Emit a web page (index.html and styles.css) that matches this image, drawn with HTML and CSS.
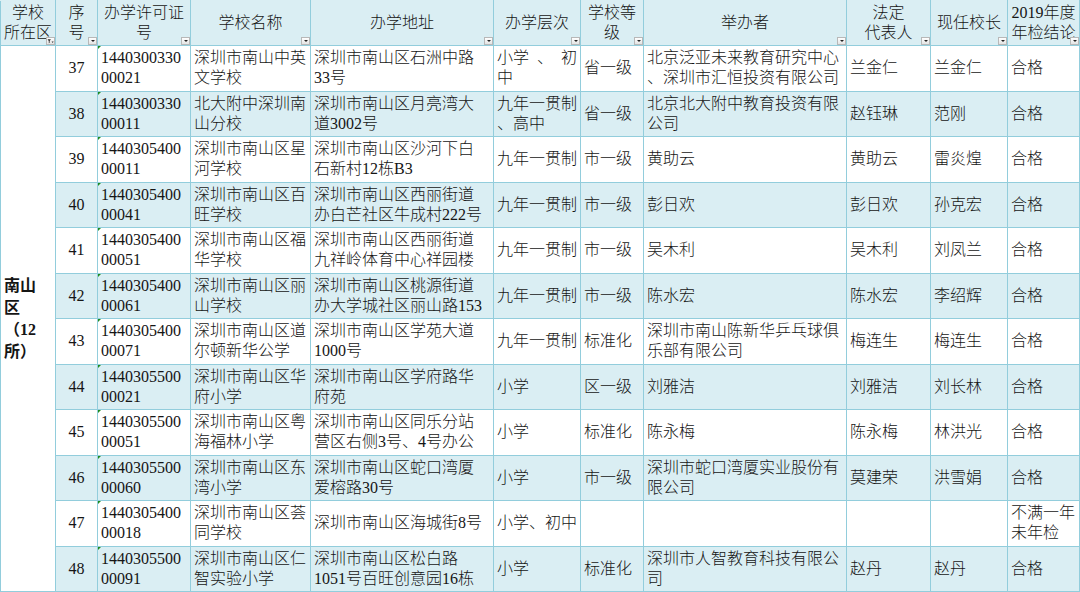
FILE: index.html
```html
<!DOCTYPE html>
<html lang="zh-CN">
<head>
<meta charset="utf-8">
<title>南山区民办学校年检结论</title>
<link rel="stylesheet" href="styles.css">
</head>
<body>
<table class="sheet">
  <colgroup>
    <col class="c1"><col class="c2"><col class="c3"><col class="c4"><col class="c5"><col class="c6">
    <col class="c7"><col class="c8"><col class="c9"><col class="c10"><col class="c11">
  </colgroup>
  <thead>
    <tr class="head">
      <th>学校<br>所在区<span class="dd filt"><svg viewBox="0 0 8 7" width="8" height="7"><path d="M0.5 1.5h4l-1.5 2v2l-1 0.7v-2.7z" fill="#333"/><path d="M5.3 4.2h2.4l-1.2 1.6z" fill="#333"/></svg></span></th>
      <th>序<br>号<span class="dd"></span></th>
      <th>办学许可证<br>号<span class="dd"></span></th>
      <th>学校名称<span class="dd"></span></th>
      <th>办学地址<span class="dd"></span></th>
      <th>办学层次<span class="dd"></span></th>
      <th>学校等<br>级<span class="dd"></span></th>
      <th>举办者<span class="dd"></span></th>
      <th>法定<br>代表人<span class="dd"></span></th>
      <th>现任校长<span class="dd"></span></th>
      <th>2019年度<br>年检结论<span class="dd"></span></th>
    </tr>
  </thead>
  <tbody>
    <tr>
      <td class="district" rowspan="12">南山<br>区<br>（12<br>所）</td>
      <td class="no">37</td>
      <td class="lic">1440300330<br>00021</td>
      <td>深圳市南山中英<br>文学校</td>
      <td>深圳市南山区石洲中路<br>33号</td>
      <td>小学&ensp;、&ensp;初<br>中</td>
      <td>省一级</td>
      <td>北京泛亚未来教育研究中心<br>、深圳市汇恒投资有限公司</td>
      <td>兰金仁</td>
      <td>兰金仁</td>
      <td>合格</td>
    </tr>
    <tr class="alt">
      <td class="no">38</td>
      <td class="lic">1440300330<br>00011</td>
      <td>北大附中深圳南<br>山分校</td>
      <td>深圳市南山区月亮湾大<br>道3002号</td>
      <td>九年一贯制<br>、高中</td>
      <td>省一级</td>
      <td>北京北大附中教育投资有限<br>公司</td>
      <td>赵钰琳</td>
      <td>范刚</td>
      <td>合格</td>
    </tr>
    <tr>
      <td class="no">39</td>
      <td class="lic">1440305400<br>00011</td>
      <td>深圳市南山区星<br>河学校</td>
      <td>深圳市南山区沙河下白<br>石新村12栋B3</td>
      <td>九年一贯制</td>
      <td>市一级</td>
      <td>黄助云</td>
      <td>黄助云</td>
      <td>雷炎煌</td>
      <td>合格</td>
    </tr>
    <tr class="alt">
      <td class="no">40</td>
      <td class="lic">1440305400<br>00041</td>
      <td>深圳市南山区百<br>旺学校</td>
      <td>深圳市南山区西丽街道<br>办白芒社区牛成村222号</td>
      <td>九年一贯制</td>
      <td>市一级</td>
      <td>彭日欢</td>
      <td>彭日欢</td>
      <td>孙克宏</td>
      <td>合格</td>
    </tr>
    <tr>
      <td class="no">41</td>
      <td class="lic">1440305400<br>00051</td>
      <td>深圳市南山区福<br>华学校</td>
      <td>深圳市南山区西丽街道<br>九祥岭体育中心祥园楼</td>
      <td>九年一贯制</td>
      <td>市一级</td>
      <td>吴木利</td>
      <td>吴木利</td>
      <td>刘凤兰</td>
      <td>合格</td>
    </tr>
    <tr class="alt">
      <td class="no">42</td>
      <td class="lic">1440305400<br>00061</td>
      <td>深圳市南山区丽<br>山学校</td>
      <td>深圳市南山区桃源街道<br>办大学城社区丽山路153</td>
      <td>九年一贯制</td>
      <td>市一级</td>
      <td>陈水宏</td>
      <td>陈水宏</td>
      <td>李绍辉</td>
      <td>合格</td>
    </tr>
    <tr>
      <td class="no">43</td>
      <td class="lic">1440305400<br>00071</td>
      <td>深圳市南山区道<br>尔顿新华公学</td>
      <td>深圳市南山区学苑大道<br>1000号</td>
      <td>九年一贯制</td>
      <td>标准化</td>
      <td>深圳市南山陈新华乒乓球俱<br>乐部有限公司</td>
      <td>梅连生</td>
      <td>梅连生</td>
      <td>合格</td>
    </tr>
    <tr class="alt">
      <td class="no">44</td>
      <td class="lic">1440305500<br>00021</td>
      <td>深圳市南山区华<br>府小学</td>
      <td>深圳市南山区学府路华<br>府苑</td>
      <td>小学</td>
      <td>区一级</td>
      <td>刘雅洁</td>
      <td>刘雅洁</td>
      <td>刘长林</td>
      <td>合格</td>
    </tr>
    <tr>
      <td class="no">45</td>
      <td class="lic">1440305500<br>00051</td>
      <td>深圳市南山区粤<br>海福林小学</td>
      <td>深圳市南山区同乐分站<br>营区右侧3号、4号办公</td>
      <td>小学</td>
      <td>标准化</td>
      <td>陈永梅</td>
      <td>陈永梅</td>
      <td>林洪光</td>
      <td>合格</td>
    </tr>
    <tr class="alt">
      <td class="no">46</td>
      <td class="lic">1440305500<br>00060</td>
      <td>深圳市南山区东<br>湾小学</td>
      <td>深圳市南山区蛇口湾厦<br>爱榕路30号</td>
      <td>小学</td>
      <td>市一级</td>
      <td>深圳市蛇口湾厦实业股份有<br>限公司</td>
      <td>莫建荣</td>
      <td>洪雪娟</td>
      <td>合格</td>
    </tr>
    <tr>
      <td class="no">47</td>
      <td class="lic">1440305400<br>00018</td>
      <td>深圳市南山区荟<br>同学校</td>
      <td>深圳市南山区海城街8号</td>
      <td>小学、初中</td>
      <td></td>
      <td></td>
      <td></td>
      <td></td>
      <td>不满一年<br>未年检</td>
    </tr>
    <tr class="alt">
      <td class="no">48</td>
      <td class="lic">1440305500<br>00091</td>
      <td>深圳市南山区仁<br>智实验小学</td>
      <td>深圳市南山区松白路<br>1051号百旺创意园16栋</td>
      <td>小学</td>
      <td>标准化</td>
      <td>深圳市人智教育科技有限公<br>司</td>
      <td>赵丹</td>
      <td>赵丹</td>
      <td>合格</td>
    </tr>
  </tbody>
</table>
</body>
</html>
```

FILE: styles.css
```css
html, body {
  margin: 0;
  padding: 0;
  background: #ffffff;
}

body {
  font-family: "Liberation Serif", "Noto Sans CJK SC", serif;
  font-size: 16px;
  font-weight: 300;
  color: #151515;
}

.sheet {
  border-collapse: collapse;
  table-layout: fixed;
  width: 1080px;
}

.c1 { width: 55px; }
.c2 { width: 42px; }
.c3 { width: 93px; }
.c4 { width: 120px; }
.c5 { width: 183px; }
.c6 { width: 87px; }
.c7 { width: 63px; }
.c8 { width: 203px; }
.c9 { width: 84px; }
.c10 { width: 77px; }
.c11 { width: 72px; }

.sheet th,
.sheet td {
  border: 1px solid #92cddc;
  padding: 0 1px 0 3px;
  line-height: 20px;
  vertical-align: middle;
  text-align: left;
  font-weight: 300;
  white-space: nowrap;
  overflow: hidden;
}

.head th {
  background: #daeef3;
  text-align: center;
  height: 44px;
  padding: 0;
  position: relative;
  border-top-color: #daeef3;
}

.sheet tbody tr {
  height: 45.5px;
}

.sheet tbody tr.alt td {
  background: #daeef3;
}

.sheet td.district {
  background: #ffffff;
  font-weight: bold;
  line-height: 22px;
  padding-left: 3px;
}

.sheet td.no {
  text-align: center;
  padding: 0;
}

.sheet td.lic {
  position: relative;
}

.sheet td.lic::before {
  content: "";
  position: absolute;
  left: 0;
  top: 0;
  width: 0;
  height: 0;
  border-top: 3px solid #1e8c1e;
  border-right: 3px solid transparent;
}

.dd {
  position: absolute;
  right: 0;
  bottom: 0;
  width: 9px;
  height: 8px;
  box-sizing: border-box;
  border: 1px solid #b8b8b8;
  background: linear-gradient(#ffffff, #e4e4e4);
}

.dd::after {
  content: "";
  position: absolute;
  left: 2px;
  top: 2px;
  width: 0;
  height: 0;
  border-left: 2px solid transparent;
  border-right: 2px solid transparent;
  border-top: 2px solid #222;
}

.dd.filt::after {
  display: none;
}

.dd.filt svg {
  display: block;
  position: absolute;
  left: 0;
  top: 0;
  width: 7px;
  height: 6px;
}
```
